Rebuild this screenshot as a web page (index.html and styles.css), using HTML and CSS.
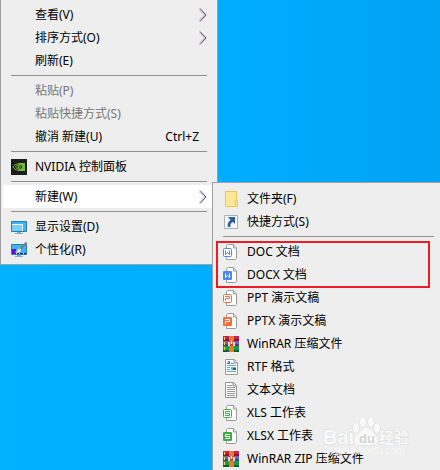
FILE: index.html
```html
<!DOCTYPE html>
<html lang="zh-CN">
<head>
<meta charset="utf-8">
<title>桌面</title>
<link rel="stylesheet" href="styles.css">
</head>
<body>
<svg class="sprite" aria-hidden="true">
  <symbol id="page" viewBox="0 0 16 16">
    <path d="M3.500 15.500V1.500l1-1h6l3 3.500v10.500l-1 1z" fill="#fff" stroke="#9a9a9a"/>
    <path d="M10.500.5V4h3" fill="#e4e4e4" stroke="#9a9a9a"/>
  </symbol>
  <symbol id="rar" viewBox="0 0 16 16">
    <rect width="16" height="5" fill="#c8204f"/><path d="M0 3h16v2H0z" fill="#8f1038"/>
    <rect y="5" width="16" height="5" fill="#6668bd"/><path d="M0 8h16v2H0z" fill="#3c4291"/>
    <rect y="10" width="16" height="6" fill="#159b4a"/><path d="M0 14h16v2H0z" fill="#086331"/>
    <path d="M1 1h1v3H1zM1 6h1v3H1zM1 11h1v3H1z" fill="#ffd530"/>
    <rect x="6" width="5" height="16" fill="#e9792b"/>
    <path d="M5 5h7v5H5z" fill="#b94a30"/><path d="M6 6v4M8.500 5v3M11 6v4" stroke="#fff" stroke-width="1.500"/>
  </symbol>
  <symbol id="chevron" viewBox="0 0 8 14">
    <path d="M0 1.500 5.500 7 0 12.500" fill="none" stroke="#8cc0ee"/>
    <path d="M1 .5 7 7 1 13.500" fill="none" stroke="#8c2f3c"/>
  </symbol>
</svg>

<main class="desktop">
  <ul class="menu" role="menu">
    <li><button class="item" type="button"><span class="icon"></span><span class="label">查看(V)</span><svg class="arrow"><use href="#chevron"/></svg></button></li>
    <li><button class="item" type="button"><span class="icon"></span><span class="label">排序方式(O)</span><svg class="arrow"><use href="#chevron"/></svg></button></li>
    <li><button class="item" type="button"><span class="icon"></span><span class="label">刷新(E)</span></button></li>
    <li class="separator"></li>
    <li><button class="item" type="button" disabled><span class="icon"></span><span class="label">粘贴(P)</span></button></li>
    <li><button class="item" type="button" disabled><span class="icon"></span><span class="label">粘贴快捷方式(S)</span></button></li>
    <li><button class="item" type="button"><span class="icon"></span><span class="label">撤消 新建(U)</span><span class="shortcut">Ctrl+Z</span></button></li>
    <li class="separator"></li>
    <li><button class="item" type="button">
      <svg class="icon" viewBox="0 0 16 16"><rect width="16" height="16" fill="#1b1c1b"/><path d="M7 4h7v8H7z" fill="#76b73e"/><path d="M2 8c2-4 7-4 10 0-3 4-8 4-10 0z" fill="#1b1c1b" stroke="#76b73e"/><path d="M4.500 8c1-2.200 4-2 5.500 0-1.500 2-4.500 2-5.500 0z" fill="none" stroke="#76b73e"/><circle cx="7.500" cy="8" r="1" fill="#76b73e"/></svg>
      <span class="label">NVIDIA 控制面板</span></button></li>
    <li class="separator"></li>
    <li><button class="item current" type="button" aria-expanded="true"><span class="icon"></span><span class="label">新建(W)</span><svg class="arrow"><use href="#chevron"/></svg></button></li>
    <li class="separator"></li>
    <li><button class="item" type="button">
      <svg class="icon" viewBox="0 0 16 16"><path d="M.5 2.500h15v10H.5z" fill="#40b4ee" stroke="#2580ad"/><path d="M1 5.500h10.500V12" fill="none" stroke="#fff"/><path d="M1 6h10v6H1z" fill="#78d0f7"/><path d="M6 13h4v1H6zM4 14h8v1H4z" fill="#8bafc2"/></svg>
      <span class="label">显示设置(D)</span></button></li>
    <li><button class="item" type="button">
      <svg class="icon" viewBox="0 0 16 16"><path d="M.5 2.500h15v10H.5z" fill="#40b4ee" stroke="#2580ad"/><path d="M1 7h4v5H1z" fill="#5b10df"/><path d="M5 11h10v1H5z" fill="#251185"/><path d="M5 11h1v1H5zM8 11h1v1H8zM12 11h1v1h-1z" fill="#fff"/><path d="M6 13h4v1H6zM4 14h8v1H4z" fill="#8bafc2"/><path d="M15.500.5 9.500 7" stroke="#717f87" stroke-width="2"/><path d="M4 10c3 0 2-3 4-3.500 2-.3 3 1.500 1.500 3C8 11 6 11 4 10z" fill="#f2f5f6" stroke="#71909f" stroke-width=".5"/></svg>
      <span class="label">个性化(R)</span></button></li>
  </ul>

  <ul class="menu submenu" role="menu">
    <li><button class="item" type="button">
      <svg class="icon" viewBox="0 0 16 16"><path d="M2.500.5h11v9h1v6h-12z" fill="#ffe797" stroke="#e9c755"/><path d="M12.500 9.500h2v6h-2z" fill="#fff0ad" stroke="#e9c755"/></svg>
      <span class="label">文件夹(F)</span></button></li>
    <li><button class="item" type="button">
      <svg class="icon" viewBox="0 0 16 16"><path d="M1.500 1.500h13v13h-13z" fill="#f7f7f7" stroke="#adb0b2"/><path d="M5 3h7v7l-2-2c-2 1-3 2-2.500 5H5c-1-3 0-5 2.500-7z" fill="#2d609c"/></svg>
      <span class="label">快捷方式(S)</span></button></li>
    <li class="separator"></li>
    <li class="highlighted"><button class="item" type="button">
      <svg class="icon" viewBox="0 0 16 16"><use href="#page"/><rect x=".5" y="4.500" width="8" height="8" rx="1" fill="#fff" stroke="#4c88ee"/><path d="M2.500 6.500v4l2-2 2 2v-4" fill="none" stroke="#4c88ee"/></svg>
      <span class="label">DOC 文档</span></button>
      <button class="item" type="button">
      <svg class="icon" viewBox="0 0 16 16"><use href="#page"/><rect y="4" width="9" height="9" rx="1" fill="#4c88ee"/><path d="M2.500 6.500v4l2-2 2 2v-4" fill="none" stroke="#fff"/></svg>
      <span class="label">DOCX 文档</span></button></li>
    <li><button class="item" type="button">
      <svg class="icon" viewBox="0 0 16 16"><use href="#page"/><rect x=".5" y="4.500" width="8" height="8" rx="1" fill="#fff" stroke="#f2713b"/><path d="M2 6.500h4.500v2h-4V11" fill="none" stroke="#f2713b"/></svg>
      <span class="label">PPT 演示文稿</span></button></li>
    <li><button class="item" type="button">
      <svg class="icon" viewBox="0 0 16 16"><use href="#page"/><rect y="4" width="9" height="9" rx="1" fill="#f2713b"/><path d="M2 6.500h4.500v2h-4V11" fill="none" stroke="#fff"/></svg>
      <span class="label">PPTX 演示文稿</span></button></li>
    <li><button class="item" type="button"><svg class="icon" viewBox="0 0 16 16"><use href="#rar"/></svg><span class="label">WinRAR 压缩文件</span></button></li>
    <li><button class="item" type="button">
      <svg class="icon" viewBox="0 0 16 16"><path d="M2.500.5h9l3 3v12h-12z" fill="#fff" stroke="#969b9d"/><path d="M11 .5V4h3.500" fill="#ddd" stroke="#969b9d"/><path d="m4 5 2-3 1 3M5 4.500h2" fill="none" stroke="#4f65bf"/><path d="M8 4.500h3M4 6.500h9M4 8.500h3M4 10.500h3M4 12.500h9" stroke="#62a7bb"/><path d="M8 8h5v3H8z" fill="#6db3dc"/><path d="M10 9h3v2h-3z" fill="#245ba3"/></svg>
      <span class="label">RTF 格式</span></button></li>
    <li><button class="item" type="button">
      <svg class="icon" viewBox="0 0 16 16"><path d="M2.500.5h8l3 3v12h-11z" fill="#fff" stroke="#919191"/><path d="M10 .5V4h3.500" fill="#ddd" stroke="#919191"/><path d="M4 3.500h5M4 5.500h8M4 7.500h8M4 9.500h8M4 11.500h8M4 13.500h8" stroke="#999"/></svg>
      <span class="label">文本文档</span></button></li>
    <li><button class="item" type="button">
      <svg class="icon" viewBox="0 0 16 16"><use href="#page"/><rect x=".5" y="4.500" width="8" height="8" rx="1" fill="#fff" stroke="#3dae45"/><path d="M7 6.500H2.500v2h4v2H2" fill="none" stroke="#3dae45"/></svg>
      <span class="label">XLS 工作表</span></button></li>
    <li><button class="item" type="button">
      <svg class="icon" viewBox="0 0 16 16"><use href="#page"/><rect y="4" width="9" height="9" rx="1" fill="#3dae45"/><path d="M7 6.500H2.500v2h4v2H2" fill="none" stroke="#fff"/></svg>
      <span class="label">XLSX 工作表</span></button></li>
    <li><button class="item" type="button"><svg class="icon" viewBox="0 0 16 16"><use href="#rar"/></svg><span class="label">WinRAR ZIP 压缩文件</span></button></li>
  </ul>

  <svg class="watermark" viewBox="0 0 92 42" role="img" aria-label="Baidu 经验">
    <g class="mark">
      <ellipse cx="34" cy="12" rx="3" ry="5"/><ellipse cx="41" cy="6" rx="3" ry="5"/><ellipse cx="49" cy="6" rx="3" ry="5"/><ellipse cx="55" cy="12" rx="3" ry="5"/>
      <path d="M44 12c5 0 6 4 9 7 5 5 3 10-3 10H38c-6 0-8-5-3-10 4-3 5-7 9-7z"/>
      <text class="brand" x="1" y="28">Bai</text>
      <text class="product" x="57" y="27">经验</text>
    </g>
    <text class="paw-text" x="37" y="27">du</text>
    <text class="address" x="2" y="38">jingyan.baidu.com</text>
  </svg>
</main>
</body>
</html>
```
FILE: styles.css
```css
* {
  box-sizing: border-box;
}

body {
  margin: 0;
  font-family: "Noto Sans", "Noto Sans CJK SC", sans-serif;
  font-size: 12px;
  line-height: 16px;
  color: #000;
}

.sprite {
  position: absolute;
  width: 0;
  height: 0;
}

.desktop {
  position: relative;
  min-height: 100vh;
  overflow: hidden;
  background: linear-gradient(90deg, #00b2ff, #00adff 50%, #00a2f4);
}

.menu {
  width: max-content;
  min-width: 218px;
  margin: 0;
  padding: 3px 2px;
  list-style: none;
  background: #eee;
  border: 1px solid #a0a0a0;
  border-top: 0;
}

.submenu {
  position: absolute;
  top: 182px;
  left: 212px;
  right: 0;
  width: auto;
  padding: 4px 2px;
  border-top: 1px solid #a0a0a0;
  border-right: 0;
}

.item {
  display: flex;
  align-items: center;
  gap: 8px;
  width: 100%;
  height: 23px;
  padding: 0 8px;
  border: 0;
  background: none;
  color: inherit;
  font: inherit;
  text-align: left;
  white-space: nowrap;
}

.item:disabled {
  color: #777;
}

.item.current {
  background: #fff;
}

.icon {
  flex: none;
  width: 16px;
  height: 16px;
}

.label {
  flex: 1;
}

.shortcut {
  padding-right: 8px;
}

.arrow {
  flex: none;
  width: 8px;
  height: 14px;
}

.separator {
  height: 7px;
  padding: 3px 8px;
}

.separator::before {
  display: block;
  height: 1px;
  background: #919191;
  content: "";
}

.submenu .separator {
  padding-right: 4px;
}

.highlighted {
  position: relative;
}

.highlighted::after {
  position: absolute;
  inset: 1px 8px -2px 1px;
  border: 2px solid #ed1c24;
  content: "";
  pointer-events: none;
}

.watermark {
  position: absolute;
  right: 26px;
  bottom: 12px;
  width: 92px;
  height: 42px;
  opacity: 0.8;
  pointer-events: none;
}

.mark {
  fill: #fcfcfc;
  stroke: #d9d9d9;
  stroke-width: 1px;
  paint-order: stroke;
}

.brand {
  font: bold 20px "Liberation Sans", sans-serif;
}

.product {
  font: bold 15px "Noto Sans CJK SC", sans-serif;
}

.paw-text {
  fill: #d0d0d0;
  font: bold 13px "Liberation Sans", sans-serif;
}

.address {
  fill: #fafafa;
  font: 10px "Liberation Sans", sans-serif;
}
```
